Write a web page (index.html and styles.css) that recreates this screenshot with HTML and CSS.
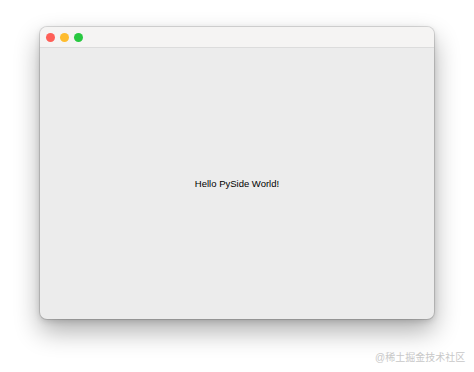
FILE: index.html
```html
<!DOCTYPE html>
<html>
<head>
<meta charset="utf-8">
<link rel="stylesheet" href="styles.css">
</head>
<body>
<div class="stage">
  <div class="window">
    <div class="titlebar">
      <span class="light red"></span>
      <span class="light yellow"></span>
      <span class="light green"></span>
    </div>
    <div class="content">
      <span class="label">Hello PySide World!</span>
    </div>
  </div>
  <div class="watermark">@稀土掘金技术社区</div>
</div>
</body>
</html>
```
FILE: styles.css
```css
html, body {
  margin: 0;
  padding: 0;
  background: #ffffff;
}
.stage {
  width: 474px;
  height: 372px;
  box-sizing: border-box;
  padding: 27px 0 0 40px;
  display: flex;
  flex-direction: column;
  font-family: "Liberation Sans", Arial, sans-serif;
}
.window {
  width: 394px;
  height: 292px;
  border-radius: 7px;
  overflow: hidden;
  display: flex;
  flex-direction: column;
  background: #ececec;
  box-shadow: 0 0 0 1px rgba(0,0,0,0.12), 0 12px 26px rgba(0,0,0,0.32), 0 2px 6px rgba(0,0,0,0.15);
}
.titlebar {
  height: 20px;
  flex: none;
  background: #f5f4f3;
  border-bottom: 1px solid #dcdcdc;
  display: flex;
  align-items: center;
  gap: 5px;
  padding-left: 6px;
}
.light {
  width: 9px;
  height: 9px;
  border-radius: 50%;
}
.red { background: #fe5f57; }
.yellow { background: #febc2e; }
.green { background: #28c840; }
.content {
  flex: 1;
  display: flex;
  align-items: center;
  justify-content: center;
}
.label {
  font-size: 9.5px;
  color: #000;
  padding-bottom: 1px;
}
.watermark {
  margin-top: 30px;
  margin-left: 335px;
  font-size: 10px;
  color: #c8c8c8;
  font-family: "Liberation Sans", "Noto Sans CJK SC", sans-serif;
  white-space: nowrap;
}
```
